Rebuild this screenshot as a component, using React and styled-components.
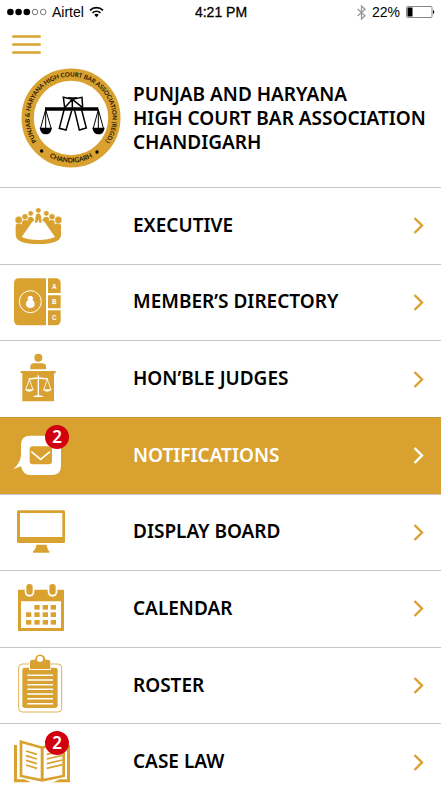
import React from "react";
import styled, { createGlobalStyle, css } from "styled-components";

const gold = "#d9a230";

const GlobalStyle = createGlobalStyle`
  * { box-sizing: border-box; }
  body {
    margin: 0;
    background: #fff;
    color: #000;
    font-family: "Noto Sans", "Open Sans", sans-serif;
  }
`;

const Page = styled.div`
  display: flex;
  flex-direction: column;
  min-height: 100vh;
  background: #fff;
`;

const StatusBar = styled.div`
  display: grid;
  grid-template-columns: 1fr auto 1fr;
  align-items: center;
  height: 24px;
  padding: 0 6px 0 7px;
  font: 14px/16px "Liberation Sans", Arial, sans-serif;
`;

const StatusGroup = styled.div`
  display: flex;
  align-items: center;
  gap: ${(p) => p.$gap}px;
  justify-content: ${(p) => (p.$end ? "flex-end" : "flex-start")};
`;

const Clock = styled.time`
  -webkit-text-stroke: 0.3px #000;
`;

const Toolbar = styled.div`
  display: flex;
  height: 44px;
  padding: 8px 12px 0;
`;

const MenuButton = styled.button`
  display: flex;
  align-items: flex-start;
  height: 26px;
  padding: 3px 0 0;
  border: 0;
  background: none;
  cursor: pointer;
`;

const Brand = styled.header`
  display: grid;
  grid-template-columns: 112px 1fr;
  align-items: center;
  padding: 0 12px 19px 21px;
`;

const Title = styled.h1`
  margin: 0;
  font-size: 19px;
  font-weight: 600;
  line-height: 24px;
  white-space: nowrap;
`;

const Menu = styled.nav`
  flex: 1;
  display: grid;
  grid-auto-rows: minmax(76px, 1fr);
`;

const MenuRow = styled.a`
  display: grid;
  grid-template-columns: 123px 1fr auto;
  align-items: center;
  padding: 0 17px 0 10px;
  border-top: 1px solid #c6c6c6;
  color: #000;
  text-decoration: none;
  --mark: ${gold};
  ${(p) =>
    p.$active &&
    css`
      background: ${gold};
      border-top-color: #c9993a;
      color: #fff;
      --mark: #fff;
    `}
`;

const Label = styled.span`
  font-size: 19px;
  font-weight: 600;
  line-height: 24px;
  padding-bottom: 2px;
`;

const IconBox = styled.span`
  position: relative;
  width: 60px;
  height: 60px;
`;

const Icon = styled.svg`
  display: block;
  width: 60px;
  height: 60px;
  overflow: visible;
  fill: ${gold};
`;

const Badge = styled.span`
  position: absolute;
  top: -1px;
  right: 1px;
  width: 24px;
  height: 24px;
  border-radius: 50%;
  background: #d2000f;
  color: #fff;
  font-size: 17px;
  font-weight: 600;
  line-height: 24px;
  text-align: center;
`;

const Arrow = styled.svg`
  display: block;
  fill: none;
  stroke: var(--mark);
  stroke-width: 2.4;
`;

function Signal() {
  return (
    <svg width="40" height="8" viewBox="0 0 40 8" aria-label="Signal 3 of 5">
      {[0, 1, 2].map((i) => (
        <circle key={i} cx={3.4 + i * 8.2} cy="4" r="3.3" />
      ))}
      {[3, 4].map((i) => (
        <circle key={i} cx={3.4 + i * 8.2} cy="4" r="2.8" fill="none" stroke="#444" strokeWidth="0.7" />
      ))}
    </svg>
  );
}

function Wifi() {
  return (
    <svg width="15" height="12" viewBox="0 0 15 12" fill="none" stroke="#000" strokeWidth="1.7" aria-label="Wi-Fi">
      <path d="M1 4.3a9.2 9.2 0 0 1 13 0" />
      <path d="M3.5 6.9a5.7 5.7 0 0 1 8 0" />
      <path d="M7.5 11.2 5.3 8.8a3.2 3.2 0 0 1 4.4 0z" fill="#000" stroke="none" />
    </svg>
  );
}

function Bluetooth() {
  return (
    <svg width="9" height="15" viewBox="0 0 9 15" fill="none" stroke="#999" strokeWidth="1.3" aria-label="Bluetooth">
      <path d="M.6 4 8 10.8 4.5 14V1L8 4.2.6 11" />
    </svg>
  );
}

function Battery() {
  return (
    <svg width="29" height="12" viewBox="0 0 29 12" aria-label="Battery">
      <rect x=".5" y=".5" width="25.5" height="11" rx="1" fill="none" stroke="#888" />
      <rect x="1.5" y="1.5" width="5" height="9" />
      <path d="M27 4c1.6.4 1.6 3.6 0 4z" />
    </svg>
  );
}

function Seal() {
  return (
    <svg width="100" height="100" viewBox="33 23 300 300" role="img" aria-label="Bar Association seal">
      <defs>
        <path id="seal-top" d="M91 257A124.400 124.400 0 1 1 275 257" />
        <path id="seal-bottom" d="M75 252A134 134 0 0 0 291 252" />
      </defs>
      <circle cx="183" cy="173" r="130" fill="#fff" stroke={gold} strokeWidth="37" />
      <g fontFamily="Lato, sans-serif" fontWeight="700" fill="#1c1200">
        <text fontSize="18.500">
          <textPath href="#seal-top" startOffset="50%" textAnchor="middle">
            PUNJAB &amp; HARYANA HIGH COURT BAR ASSOCIATION (REGD.)
          </textPath>
        </text>
        <text fontSize="20">
          <textPath href="#seal-bottom" startOffset="50%" textAnchor="middle">
            CHANDIGARH
          </textPath>
        </text>
      </g>
      <circle cx="95" cy="272" r="5" />
      <circle cx="261" cy="275" r="5" />
      <path d="M105 141h160v10H105z" />
      <g fill="none" stroke="#000" strokeWidth="4.500">
        <path d="M164 142l-4-31 27 6 29-6 2 31M187 117l-23 25M187 117l31 25M187 117v25M175 113h25" />
        <path d="M162 149l-14 55 20 5 17-58M194 151l14 58 21-6-14-54" />
        <path d="M107 148l-15 55M107 148l16 55M107 148v55M265 148l-15 55M265 148l15 55M265 148v55" strokeWidth="3" />
      </g>
      <path d="M89 202h37c-2 13-8 20-18 20s-17-7-19-20zM247 202h37c-2 13-8 20-18 20s-17-7-19-20z" />
    </svg>
  );
}

function ExecutiveIcon() {
  return (
    <Icon viewBox="30 17 180 180">
      <path d="M47 105q1-6 9-6t10 4v-9q1-5 9-5t8 4v-9q1-5 9-5 6 0 8 5l5 12h20l5-12q2-5 8-5 8 0 9 5v9q0-4 8-4t9 5v9q2-4 10-4t9 6v28q0 28-68 28t-68-28z" />
      <path d="M98 93h34l33 47q-20 9-50 9t-50-9z" fill="#fff" />
      <path d="M105 97l2-20q2-8 8-8t8 8l2 20h-7l-3-10-3 10z" />
      <g stroke="#fff" strokeWidth="1.500">
        <circle cx="56" cy="89" r="11" />
        <circle cx="75" cy="79" r="9" />
        <circle cx="92" cy="69" r="8" />
        <circle cx="115" cy="60" r="8" />
        <circle cx="139" cy="69" r="8" />
        <circle cx="156" cy="79" r="9" />
        <circle cx="175" cy="89" r="11" />
      </g>
    </Icon>
  );
}

function DirectoryIcon() {
  return (
    <Icon viewBox="30 245 180 180">
      <path d="M57 264h81v141H57q-15 0-15-15V279q0-15 15-15zM144 264h23q15 0 15 15v29h-38zM144 315h38v39h-38zM144 360h38v30q0 15-15 15h-23z" />
      <circle cx="91" cy="334" r="33" fill="none" stroke="#fff" strokeWidth="3" />
      <path d="M91 317a7 7 0 0 1 6 12c11 5 10 24-6 24s-17-19-6-24a7 7 0 0 1 6-12z" fill="#fff" />
      <g fill="#fff" fontFamily="Liberation Sans, sans-serif" fontWeight="700" fontSize="19" textAnchor="middle">
        <text x="163" y="295">A</text>
        <text x="163" y="342">B</text>
        <text x="163" y="389">C</text>
      </g>
    </Icon>
  );
}

function JudgesIcon() {
  return (
    <Icon viewBox="30 26 180 180">
      <circle cx="115" cy="52" r="12" />
      <path d="M91 87v-7q0-11 11-11h25q11 0 11 11v7zM62 92h105v7h-5v84H67V99h-5z" />
      <g fill="none" stroke="#fff" strokeWidth="4">
        <path d="M115 105v62M86 116l29-3 29 3" />
        <path d="M88 117l-11 31M88 117l11 31M142 117l-11 31M142 117l11 31" strokeWidth="2.500" />
      </g>
      <path d="M74 147h28q-5 7-14 7t-14-7zM128 147h28q-5 7-14 7t-14-7zM97 170l12-5h12l12 5z" fill="#fff" />
    </Icon>
  );
}

function NotificationsIcon() {
  return (
    <Icon viewBox="30 256 180 180">
      <path d="M90 285h65q28 0 28 28v62q0 28-28 28H90q-21 0-27-26l-23 8q19-15 23-39v-33q0-28 27-28z" fill="#fff" />
      <rect x="89" y="317" width="67" height="54" rx="10" />
      <path d="M94 333l28 23 28-23" fill="none" stroke="#fff" strokeWidth="5" />
    </Icon>
  );
}

function DisplayIcon() {
  return (
    <Icon viewBox="30 22 180 180">
      <path fillRule="evenodd" d="M55 47h136q4 0 4 4v90q0 4-4 4H55q-4 0-4-4V51q0-4 4-4zm5 8v72h127V55z" />
      <path d="M109 150h31q2 13 5 17l3 3v4H99v-4l4-3q4-5 6-17z" />
    </Icon>
  );
}

function CalendarIcon() {
  const cells = [
    [103, 330], [128, 330], [152, 330],
    [78, 352], [103, 352], [128, 352], [152, 352],
    [78, 375], [103, 375], [128, 375], [152, 375],
  ];
  return (
    <Icon viewBox="30 252 180 180">
      <path fillRule="evenodd" d="M54 284h138v124H54zm9 35v80h120v-80z" />
      <rect x="74" y="262" width="29" height="43" rx="14" fill="#fff" />
      <rect x="143" y="262" width="29" height="43" rx="14" fill="#fff" />
      <rect x="79" y="267" width="19" height="32" rx="9" />
      <rect x="148" y="267" width="19" height="32" rx="9" />
      {cells.map(([x, y]) => (
        <rect key={`${x}-${y}`} x={x} y={y} width="16" height="14" />
      ))}
    </Icon>
  );
}

function RosterIcon() {
  return (
    <Icon viewBox="30 31 180 180">
      <rect x="56" y="55" width="129" height="144" rx="11" fill="#fff" stroke={gold} strokeWidth="2.500" />
      <rect x="67" y="66" width="106" height="121" rx="8" />
      <path d="M87 73V49q0-8 8-8h9a17 17 0 0 1 33 0h8q8 0 8 8v24z" fill="#fff" />
      <path d="M90 70V50q0-8 8-8h7a15 15 0 0 1 31 0h7q8 0 8 8v20z" />
      <circle cx="120" cy="40" r="9" fill="#fff" />
      <path d="M82 89h77M82 103h77M82 117h77M82 131h77M82 145h77M82 159h77M82 174h77" fill="none" stroke="#fff" strokeWidth="4.500" />
    </Icon>
  );
}

function CaseLawIcon() {
  return (
    <Icon viewBox="30 262 180 180">
      <path d="M42 301h9v103h22l20 9H42zM201 301h9v112h-51l20-9h22z" />
      <path d="M63 291l63 18 65-18v103l-65 13-63-13z" fill="none" stroke={gold} strokeWidth="8" />
      <path d="M122 305h9v102h-9z" />
      <path d="M78 319l33 10M78 333l33 10M78 347l33 10M78 361l33 10M140 329l47-11M140 343l47-11M140 357l47-11M140 371l47-11" fill="none" stroke={gold} strokeWidth="5" />
    </Icon>
  );
}

const items = [
  { label: "EXECUTIVE", icon: ExecutiveIcon },
  { label: "MEMBER’S DIRECTORY", icon: DirectoryIcon },
  { label: "HON’BLE JUDGES", icon: JudgesIcon },
  { label: "NOTIFICATIONS", icon: NotificationsIcon, badge: 2, active: true },
  { label: "DISPLAY BOARD", icon: DisplayIcon },
  { label: "CALENDAR", icon: CalendarIcon },
  { label: "ROSTER", icon: RosterIcon },
  { label: "CASE LAW", icon: CaseLawIcon, badge: 2 },
];

export default function App() {
  return (
    <Page>
      <GlobalStyle />
      <StatusBar>
        <StatusGroup $gap={5}>
          <Signal />
          <span>Airtel</span>
          <Wifi />
        </StatusGroup>
        <Clock>4:21 PM</Clock>
        <StatusGroup $gap={6} $end>
          <Bluetooth />
          <span>22%</span>
          <Battery />
        </StatusGroup>
      </StatusBar>
      <Toolbar>
        <MenuButton type="button" aria-label="Menu">
          <svg width="29" height="19" viewBox="0 0 29 19" stroke={gold} strokeWidth="2.600" strokeLinecap="round">
            <path d="M1.300 1.500h26.400M1.300 9.500h26.400M1.300 17.500h26.400" />
          </svg>
        </MenuButton>
      </Toolbar>
      <Brand>
        <Seal />
        <Title>
          PUNJAB AND HARYANA
          <br />
          HIGH COURT BAR ASSOCIATION
          <br />
          CHANDIGARH
        </Title>
      </Brand>
      <Menu>
        {items.map(({ label, icon: Glyph, badge, active }) => (
          <MenuRow key={label} href="#" $active={active} aria-current={active ? "page" : undefined}>
            <IconBox>
              <Glyph />
              {badge && <Badge>{badge}</Badge>}
            </IconBox>
            <Label>{label}</Label>
            <Arrow width="11" height="17" viewBox="0 0 11 17">
              <path d="M1.500 1 9 8.500 1.500 16" />
            </Arrow>
          </MenuRow>
        ))}
      </Menu>
    </Page>
  );
}
